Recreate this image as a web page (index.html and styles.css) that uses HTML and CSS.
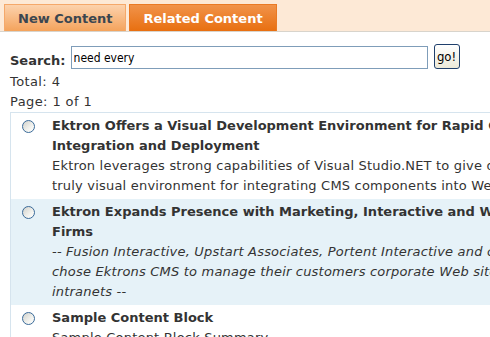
FILE: index.html
```html
<!DOCTYPE html>
<html>
<head>
    <title>Related Content</title>
    <link rel="stylesheet" href="styles.css">
</head>
<body>
    <div class="tabbar">
        <a class="tab">New Content</a>
        <a class="tab tab-active">Related Content</a>
    </div>

    <div class="content">
        <form class="search">
            <label class="search-label" for="q">Search:</label>
            <input class="search-input" id="q" type="text" value="need every">
            <button class="search-go" type="button">go!</button>
        </form>
        <p class="info">Total: 4</p>
        <p class="info">Page: 1 of 1</p>

        <div class="results">
            <div class="result">
                <div class="pick"><span class="radio"></span></div>
                <div class="body">
                    <div class="title">Ektron Offers a Visual Development Environment for Rapid CMS<br>Integration and Deployment</div>
                    <div class="summary">Ektron leverages strong capabilities of Visual Studio.NET to give developers a<br>truly visual environment for integrating CMS components into Web applications.</div>
                </div>
            </div>
            <div class="result alt">
                <div class="pick"><span class="radio"></span></div>
                <div class="body">
                    <div class="title">Ektron Expands Presence with Marketing, Interactive and Web Design<br>Firms</div>
                    <div class="summary quote">-- Fusion Interactive, Upstart Associates, Portent Interactive and others<br>chose Ektrons CMS to manage their customers corporate Web sites and<br>intranets --</div>
                </div>
            </div>
            <div class="result">
                <div class="pick"><span class="radio"></span></div>
                <div class="body">
                    <div class="title">Sample Content Block</div>
                    <div class="summary">Sample Content Block Summary</div>
                </div>
            </div>
        </div>
    </div>
</body>
</html>
```

FILE: styles.css
```css
html {
    overflow: hidden;
}
body {
    margin: 0;
    font-family: "DejaVu Sans", Verdana, sans-serif;
    font-size: 13px;
    line-height: 20px;
    color: #333;
    background-color: #fff;
}

/* tabs */
.tabbar {
    display: flex;
    gap: 3px;
    height: 27px;
    padding: 4px 0 0 4px;
    background-color: #fde9d6;
    border-bottom: 1px solid #d8d4cc;
}
.tab {
    display: block;
    padding: 0 13px;
    line-height: 27px;
    font-weight: bold;
    color: #3b4650;
    border: 1px solid #f5a86a;
    border-bottom: none;
    background: linear-gradient(#fcd2ad, #f4a35c);
}
.tab-active {
    color: #fff;
    border-color: #ea7a24;
    background: linear-gradient(#f1934a, #e86f10);
}

/* search */
.content {
    padding-left: 10px;
}
.search {
    display: flex;
    align-items: flex-end;
    margin: 12px 0 0;
}
.search-label {
    font-weight: bold;
    margin-right: 5px;
    margin-bottom: -2px;
}
.search-input {
    box-sizing: border-box;
    width: 357px;
    height: 23px;
    margin: 0;
    padding: 0 2px;
    border: 1px solid #7f9db9;
    font-family: "DejaVu Sans Condensed", "DejaVu Sans", sans-serif;
    font-size: 12px;
    color: #000;
}
.search-go {
    box-sizing: border-box;
    width: 26px;
    height: 25px;
    margin: 0 0 0 6px;
    padding: 0;
    border: 1px solid #1f3f6b;
    border-radius: 3px;
    background: linear-gradient(#ffffff, #ece9d8);
    font-family: "DejaVu Sans Condensed", "DejaVu Sans", sans-serif;
    font-size: 13px;
    color: #000;
}
.info {
    margin: 0;
    letter-spacing: 0.4px;
}
.search + .info {
    margin-top: 3px;
}

/* result list */
.results {
    width: 720px;
    border-top: 1px solid #d6e4ee;
    border-left: 1px solid #d6e4ee;
}
.result {
    display: grid;
    grid-template-columns: 41px 1fr;
    padding: 3px 0;
    white-space: nowrap;
}
.result.alt {
    background-color: #e6f2f8;
}
.pick {
    padding: 4px 0 0 11px;
}
.radio {
    display: block;
    box-sizing: border-box;
    width: 13px;
    height: 13px;
    border: 1px solid #3a6a99;
    border-radius: 50%;
    background: linear-gradient(135deg, #d2d2cc, #f4f4f0 65%, #fff);
}
.title {
    font-weight: bold;
}
.summary {
    letter-spacing: 0.2px;
}
.quote {
    font-style: italic;
}
```
